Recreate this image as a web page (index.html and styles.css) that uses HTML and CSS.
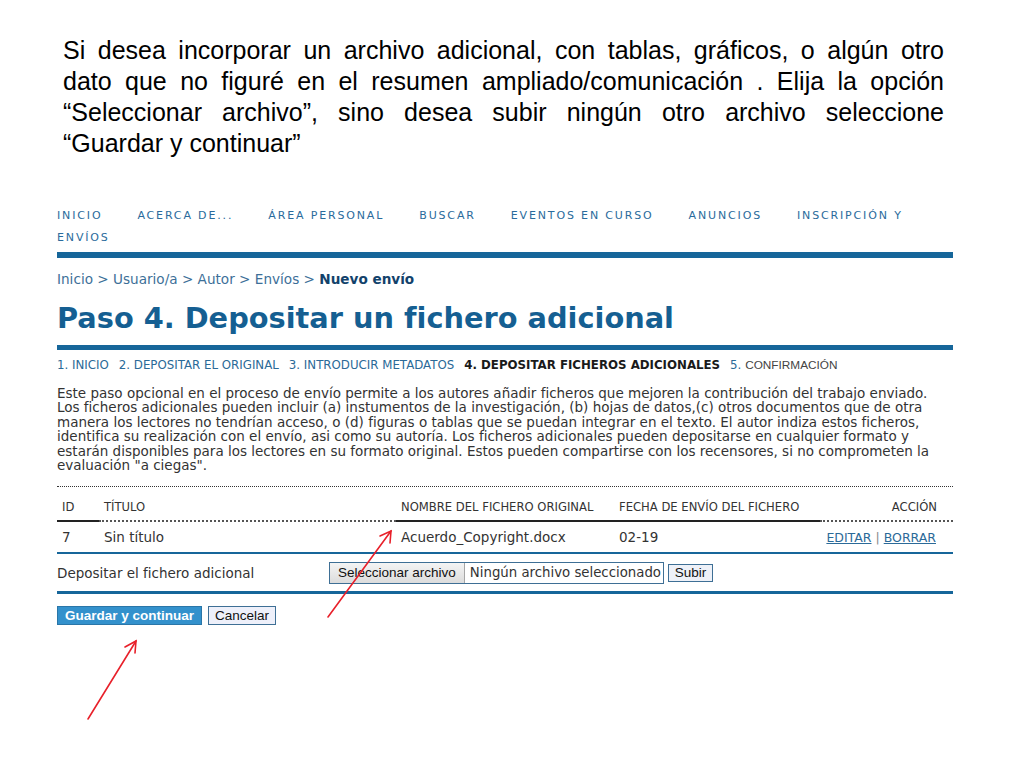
FILE: index.html
```html
<!DOCTYPE html>
<html lang="es">
<head>
<meta charset="utf-8">
<title>Paso 4</title>
<link rel="stylesheet" href="styles.css">
</head>
<body>
<div class="page">
  <div class="intro">
    <span class="jl">Si desea incorporar un archivo adicional, con tablas, gráficos, o algún otro</span>
    <span class="jl">dato que no figuré en el resumen ampliado/comunicación . Elija la opción</span>
    <span class="jl">“Seleccionar archivo”, sino desea subir ningún otro archivo seleccione</span>
    <span class="ll">“Guardar y continuar”</span>
  </div>

  <div class="site">
    <nav class="nav">
      <span class="nav-item">INICIO</span><span class="nav-item">ACERCA DE...</span><span class="nav-item">ÁREA PERSONAL</span><span class="nav-item">BUSCAR</span><span class="nav-item">EVENTOS EN CURSO</span><span class="nav-item">ANUNCIOS</span><span class="nav-item">INSCRIPCIÓN Y</span><br><span class="nav-item">ENVÍOS</span>
    </nav>
    <div class="crumbs">Inicio &gt; Usuario/a &gt; Autor &gt; Envíos &gt; <b>Nuevo envío</b></div>
    <h1 class="title">Paso 4. Depositar un fichero adicional</h1>
    <div class="steps">
      <span>1. INICIO</span><span>2. DEPOSITAR EL ORIGINAL</span><span>3. INTRODUCIR METADATOS</span><span class="cur">4. DEPOSITAR FICHEROS ADICIONALES</span><span><span class="num">5.</span> <span class="alt">CONFIRMACIÓN</span></span>
    </div>
    <p class="desc">Este paso opcional en el proceso de envío permite a los autores añadir ficheros que mejoren la contribución del trabajo enviado.<br>Los ficheros adicionales pueden incluir (a) instumentos de la investigación, (b) hojas de datos,(c) otros documentos que de otra<br>manera los lectores no tendrían acceso, o (d) figuras o tablas que se puedan integrar en el texto. El autor indiza estos ficheros,<br>identifica su realización con el envío, asi como su autoría. Los ficheros adicionales pueden depositarse en cualquier formato y<br>estarán disponibles para los lectores en su formato original. Estos pueden compartirse con los recensores, si no comprometen la<br>evaluación "a ciegas".</p>

    <table class="files">
      <tr class="head">
        <th class="c1 solid">ID</th>
        <th class="c2 dotted">TÍTULO</th>
        <th class="c3 solid">NOMBRE DEL FICHERO ORIGINAL</th>
        <th class="c4 solid">FECHA DE ENVÍO DEL FICHERO</th>
        <th class="c5 dotted right">ACCIÓN</th>
      </tr>
      <tr class="row">
        <td>7</td>
        <td>Sin título</td>
        <td>Acuerdo_Copyright.docx</td>
        <td>02-19</td>
        <td class="right actions"><a>EDITAR</a> <span class="sep">|</span> <a>BORRAR</a></td>
      </tr>
    </table>

    <div class="upload">
      <span class="upload-label">Depositar el fichero adicional</span>
      <span class="file">
        <span class="file-btn">Seleccionar archivo</span><span class="file-name">Ningún archivo seleccionado</span>
      </span>
      <span class="btn-sub">Subir</span>
    </div>

    <div class="actions-bar">
      <span class="btn-primary">Guardar y continuar</span>
      <span class="btn-cancel">Cancelar</span>
    </div>
  </div>
</div>

<svg class="arrows" width="1024" height="768" viewBox="0 0 1024 768">
  <g stroke="#e8202a" stroke-width="1.6" fill="none" stroke-linecap="round">
    <line x1="328" y1="617" x2="391" y2="531"/>
    <polyline points="380,536 391,531 390,543"/>
    <line x1="88" y1="719" x2="136" y2="641"/>
    <polyline points="125,647 136,641 135,653"/>
  </g>
</svg>
</body>
</html>
```

FILE: styles.css
```css
html, body {
  margin: 0;
  padding: 0;
  background: #ffffff;
}

.page {
  position: relative;
  width: 1024px;
  height: 768px;
  overflow: hidden;
}

.intro {
  margin: 35px 0 0 63px;
  width: 881px;
  font-family: "Liberation Sans", Arial, sans-serif;
  font-size: 25px;
  line-height: 31px;
  color: #000;
}

.intro .jl {
  display: block;
  white-space: nowrap;
  text-align: justify;
  text-align-last: justify;
}

.intro .ll {
  display: block;
}

.site {
  margin: 46px 0 0 57px;
  width: 896px;
  font-family: "DejaVu Sans", Verdana, sans-serif;
  color: #333;
}

.nav {
  font-size: 11px;
  letter-spacing: 1.85px;
  line-height: 22px;
  color: #2a6b9c;
  padding-bottom: 3px;
  border-bottom: 6px solid #16669a;
  white-space: nowrap;
}

.nav-item {
  display: inline-block;
  vertical-align: top;
  margin-right: 35px;
}

.crumbs {
  margin-top: 13px;
  font-size: 13.6px;
  line-height: 16px;
  color: #3c6f98;
}

.crumbs b {
  color: #12426b;
}

.title {
  margin: 13px 0 0 0;
  font-family: "DejaVu Sans", Verdana, sans-serif;
  font-weight: bold;
  font-size: 28.8px;
  line-height: 36px;
  color: #155f92;
  padding-bottom: 9px;
  border-bottom: 5px solid #16669a;
}

.steps {
  margin-top: 8px;
  font-size: 11.8px;
  line-height: 14px;
  color: #2b6a98;
  display: flex;
  gap: 10px;
  white-space: nowrap;
}

.steps .cur {
  color: #1a1a1a;
  font-weight: bold;
}

.steps .alt {
  font-family: "Liberation Sans", Arial, sans-serif;
  font-size: 11.8px;
  color: #444;
}

.desc {
  margin: 14px 0 0 0;
  font-size: 13.5px;
  line-height: 14.4px;
  color: #333;
  white-space: nowrap;
}

.files {
  margin-top: 14px;
  width: 896px;
  border-collapse: separate;
  border-spacing: 0;
  border-top: 1px dotted #333;
  table-layout: fixed;
}

.files th,
.files td {
  box-sizing: border-box;
}

.files th {
  font-weight: normal;
  text-align: left;
  font-size: 11.6px;
  color: #333;
  height: 35px;
  padding: 7px 5px 0 5px;
  vertical-align: middle;
  white-space: nowrap;
}

.files th.solid {
  border-bottom: 2px solid #222;
}

.files th.dotted {
  border-bottom: 2px dotted #555;
}

.files .c1 { width: 42px; }
.files .c2 { width: 297px; }
.files .c3 { width: 218px; }
.files .c4 { width: 206px; }
.files .c5 { width: 133px; }

.files td {
  height: 32px;
  padding: 0 5px;
  font-size: 13.5px;
  color: #333;
  border-bottom: 2px solid #16669a;
  vertical-align: middle;
  white-space: nowrap;
}

.right {
  text-align: right !important;
}

.files th.right {
  padding-right: 16px;
}

.files td.actions {
  padding-right: 17px;
  font-size: 12.5px;
}

.actions a {
  color: #2b6a98;
  text-decoration: underline;
}

.actions .sep {
  color: #888;
}

.upload {
  height: 37px;
  display: flex;
  align-items: center;
  border-bottom: 3px solid #16669a;
  font-size: 13.5px;
}

.upload-label {
  width: 272px;
  color: #333;
}

.file {
  display: flex;
  height: 20px;
  border: 1px solid #3e6f95;
  font-family: "Liberation Sans", Arial, sans-serif;
}

.file-btn {
  display: flex;
  align-items: center;
  padding: 0 8px;
  font-size: 13.5px;
  color: #111;
  background: linear-gradient(#f4f4f4, #dcdcdc);
  border-right: 1px solid #a6a6a6;
  white-space: nowrap;
}

.file-name {
  display: flex;
  align-items: center;
  padding: 0 0 0 5px;
  width: 193px;
  background: #fff;
  font-family: "DejaVu Sans", Verdana, sans-serif;
  font-size: 13.3px;
  color: #333;
  white-space: nowrap;
  overflow: hidden;
}

.btn-sub {
  margin-left: 4px;
  height: 16px;
  display: flex;
  align-items: center;
  padding: 0 6px;
  border: 1px solid #3e6f95;
  background: #eef1f8;
  font-family: "Liberation Sans", Arial, sans-serif;
  font-size: 13.5px;
  color: #111;
}

.actions-bar {
  margin-top: 12px;
  display: flex;
  gap: 6px;
}

.btn-primary {
  height: 17px;
  display: flex;
  align-items: center;
  padding: 0 7px;
  background: #3391cc;
  border: 1px solid #2a76a8;
  color: #fff;
  font-family: "Liberation Sans", Arial, sans-serif;
  font-weight: bold;
  font-size: 13.5px;
  white-space: nowrap;
}

.btn-cancel {
  height: 17px;
  display: flex;
  align-items: center;
  padding: 0 6px;
  background: #eef0fa;
  border: 1px solid #3e6f95;
  color: #111;
  font-family: "Liberation Sans", Arial, sans-serif;
  font-size: 13.5px;
}

.arrows {
  position: absolute;
  left: 0;
  top: 0;
  pointer-events: none;
}
```
